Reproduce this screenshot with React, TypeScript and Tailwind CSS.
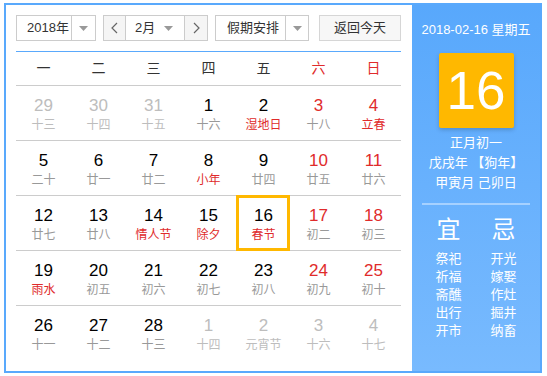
import React from "react";

type Day = {
  n: number;
  l: string;
  other?: boolean;
  fest?: boolean;
  sel?: boolean;
};

const rows: Day[][] = [
  [
    { n: 29, l: "十三", other: true },
    { n: 30, l: "十四", other: true },
    { n: 31, l: "十五", other: true },
    { n: 1, l: "十六" },
    { n: 2, l: "湿地日", fest: true },
    { n: 3, l: "十八" },
    { n: 4, l: "立春", fest: true },
  ],
  [
    { n: 5, l: "二十" },
    { n: 6, l: "廿一" },
    { n: 7, l: "廿二" },
    { n: 8, l: "小年", fest: true },
    { n: 9, l: "廿四" },
    { n: 10, l: "廿五" },
    { n: 11, l: "廿六" },
  ],
  [
    { n: 12, l: "廿七" },
    { n: 13, l: "廿八" },
    { n: 14, l: "情人节", fest: true },
    { n: 15, l: "除夕", fest: true },
    { n: 16, l: "春节", fest: true, sel: true },
    { n: 17, l: "初二" },
    { n: 18, l: "初三" },
  ],
  [
    { n: 19, l: "雨水", fest: true },
    { n: 20, l: "初五" },
    { n: 21, l: "初六" },
    { n: 22, l: "初七" },
    { n: 23, l: "初八" },
    { n: 24, l: "初九" },
    { n: 25, l: "初十" },
  ],
  [
    { n: 26, l: "十一" },
    { n: 27, l: "十二" },
    { n: 28, l: "十三" },
    { n: 1, l: "十四", other: true },
    { n: 2, l: "元宵节", other: true },
    { n: 3, l: "十六", other: true },
    { n: 4, l: "十七", other: true },
  ],
];

const weekdays = ["一", "二", "三", "四", "五", "六", "日"];
const yi = ["祭祀", "祈福", "斋醮", "出行", "开市"];
const ji = ["开光", "嫁娶", "作灶", "掘井", "纳畜"];

const font = {
  fontFamily: '"Liberation Sans", "Noto Sans CJK SC", sans-serif',
};

function Caret() {
  return (
    <svg width="9" height="5" viewBox="0 0 9 5">
      <polygon points="0,0 9,0 4.5,5" fill="#999" />
    </svg>
  );
}

function Chevron({ dir }: { dir: "left" | "right" }) {
  return (
    <svg width="7" height="12" viewBox="0 0 7 12">
      <polyline
        points={dir === "left" ? "6,1 1,6 6,11" : "1,1 6,6 1,11"}
        fill="none"
        stroke="#666"
        strokeWidth="1.2"
      />
    </svg>
  );
}

function Toolbar() {
  return (
    <div className="flex h-[26px] whitespace-nowrap text-[13px] text-[#333]">
      <div className="flex w-[80px] border border-[#ccc] bg-white">
        <div className="flex w-[54px] items-center pl-[10px]">2018年</div>
        <div className="flex flex-1 items-center justify-center border-l border-[#ccc]">
          <Caret />
        </div>
      </div>
      <div className="ml-[7px] flex w-[105px] border border-[#ccc] bg-white">
        <div className="flex w-[21px] items-center justify-center bg-[#f5f5f5]">
          <Chevron dir="left" />
        </div>
        <div className="flex w-[60px] items-center justify-between border-x border-[#ccc] pr-[11px] pl-[9px]">
          <span>2月</span>
          <Caret />
        </div>
        <div className="flex flex-1 items-center justify-center bg-[#f5f5f5]">
          <Chevron dir="right" />
        </div>
      </div>
      <div className="ml-[7px] flex w-[94px] border border-[#ccc] bg-white">
        <div className="flex w-[69px] items-center pl-[11px]">假期安排</div>
        <div className="flex flex-1 items-center justify-center border-l border-[#ccc]">
          <Caret />
        </div>
      </div>
      <div className="ml-[10px] flex w-[82px] items-center justify-center border border-[#d6d6d6] bg-[#f7f7f7]">
        返回今天
      </div>
    </div>
  );
}

function Cell({ d, col }: { d: Day; col: number }) {
  const weekend = col >= 5;
  const numColor = d.other
    ? "text-[#bdbdbd]"
    : weekend
    ? "text-[#e02b2b]"
    : "text-black";
  const lunarColor = d.other
    ? "text-[#bdbdbd]"
    : d.fest
    ? "text-[#e02b2b]"
    : "text-[#999]";
  return (
    <div className="relative flex flex-col items-center pt-[10px]">
      <div className={`text-[17px] leading-[20px] ${numColor}`}>{d.n}</div>
      <div className={`mt-px text-[12px] leading-[16px] ${lunarColor}`}>{d.l}</div>
      {d.sel && (
        <div className="absolute -top-px right-px bottom-[-1px] left-0 border-[3px] border-[#ffb800]" />
      )}
    </div>
  );
}

function SidePanel() {
  return (
    <div className="flex w-[128px] flex-col items-center bg-gradient-to-b from-[#58a8fc] to-[#78bafe] text-white">
      <div className="mt-[15px] text-[13px] leading-[20px]">2018-02-16 星期五</div>
      <div className="mt-[13px] flex h-[75px] w-[75px] items-center justify-center rounded-[2px] bg-[#ffb800] text-[53px] leading-none shadow-[0_2px_4px_rgba(0,0,0,0.18)]">
        16
      </div>
      <div className="mt-[5px] flex flex-col items-center whitespace-pre text-[13px] leading-[20px]">
        <div>正月初一</div>
        <div>戊戌年 【狗年】</div>
        <div>甲寅月 己卯日</div>
      </div>
      <div className="mt-[10px] h-[2px] w-[108px] bg-[#a6d1ff]" />
      <div className="mt-[10px] flex">
        <div className="flex w-[55px] flex-col items-center">
          <div className="text-[24px] leading-[30px]">宜</div>
          <div className="mt-[5px] flex flex-col items-center text-[13px] leading-[18px]">
            {yi.map((t) => (
              <div key={t}>{t}</div>
            ))}
          </div>
        </div>
        <div className="flex w-[55px] flex-col items-center">
          <div className="text-[24px] leading-[30px]">忌</div>
          <div className="mt-[5px] flex flex-col items-center text-[13px] leading-[18px]">
            {ji.map((t) => (
              <div key={t}>{t}</div>
            ))}
          </div>
        </div>
      </div>
    </div>
  );
}

export default function App() {
  return (
    <div className="h-[376px] w-[547px] bg-white pt-[3px] pl-[4px]" style={font}>
      <div className="flex h-[370px] w-[538px] border-2 border-[#59a9fc]">
        <div className="w-[406px] pt-[10px] pl-[10px]">
          <Toolbar />
          <div className="mt-[10px] w-[385px] border-t border-[#5aa9fc]">
            <div className="grid h-[34px] grid-cols-7 border-b border-[#ccc] text-[14px]">
              {weekdays.map((w, i) => (
                <div
                  key={w}
                  className={`flex items-center justify-center ${
                    i >= 5 ? "text-[#e02b2b]" : "text-[#333]"
                  }`}
                >
                  {w}
                </div>
              ))}
            </div>
            {rows.map((r, ri) => (
              <div
                key={ri}
                className={`grid h-[55px] grid-cols-7 ${
                  ri < rows.length - 1 ? "border-b border-[#ccc]" : ""
                }`}
              >
                {r.map((d, ci) => (
                  <Cell key={ci} d={d} col={ci} />
                ))}
              </div>
            ))}
          </div>
        </div>
        <SidePanel />
      </div>
    </div>
  );
}
